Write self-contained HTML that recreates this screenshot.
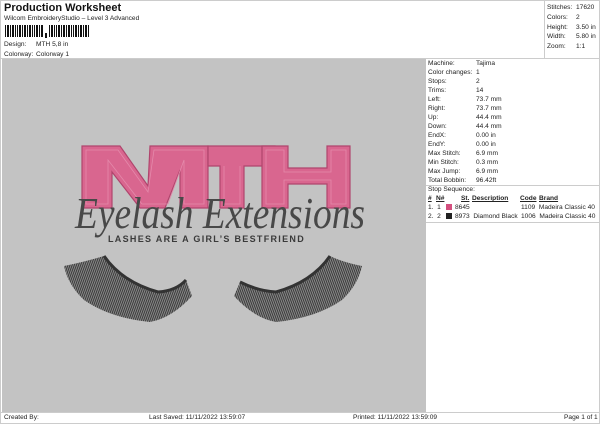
<!DOCTYPE html>
<html><head><meta charset="utf-8"><style>
*{margin:0;padding:0;box-sizing:border-box}
body{width:600px;height:424px;background:#fff;font-family:"Liberation Sans",sans-serif;color:#222;position:relative;overflow:hidden;font-size:6.6px}
.a{position:absolute;white-space:nowrap}
</style></head><body>
<div class="a" style="left:0;top:0;width:600px;height:424px;border:1px solid #ccc"></div>
<div class="a" style="left:4px;top:2px;font-size:11px;font-weight:bold;color:#111">Production Worksheet</div>
<div class="a" style="left:4px;top:15px">Wilcom EmbroideryStudio – Level 3 Advanced</div>
<svg class="a" style="left:5px;top:25px" width="85" height="13">
<g fill="#111">
<rect x="0" y="0" width="1" height="12"/><rect x="2" y="0" width="2" height="12"/><rect x="5" y="0" width="1" height="12"/><rect x="7" y="0" width="2" height="12"/><rect x="10" y="0" width="1" height="12"/><rect x="12" y="0" width="1" height="12"/><rect x="14" y="0" width="2" height="12"/><rect x="17" y="0" width="1" height="12"/><rect x="19" y="0" width="2" height="12"/><rect x="22" y="0" width="1" height="12"/><rect x="24" y="0" width="2" height="12"/><rect x="27" y="0" width="1" height="12"/><rect x="29" y="0" width="1" height="12"/><rect x="31" y="0" width="2" height="12"/><rect x="34" y="0" width="1" height="12"/><rect x="36" y="0" width="2" height="12"/><rect x="40" y="8" width="2" height="5"/><rect x="44" y="0" width="1" height="12"/><rect x="46" y="0" width="2" height="12"/><rect x="49" y="0" width="1" height="12"/><rect x="51" y="0" width="1" height="12"/><rect x="53" y="0" width="2" height="12"/><rect x="56" y="0" width="1" height="12"/><rect x="58" y="0" width="2" height="12"/><rect x="61" y="0" width="1" height="12"/><rect x="63" y="0" width="2" height="12"/><rect x="66" y="0" width="1" height="12"/><rect x="68" y="0" width="1" height="12"/><rect x="70" y="0" width="2" height="12"/><rect x="73" y="0" width="1" height="12"/><rect x="75" y="0" width="2" height="12"/><rect x="78" y="0" width="1" height="12"/><rect x="80" y="0" width="2" height="12"/><rect x="83" y="0" width="1" height="12"/>
</g></svg>
<div class="a" style="left:4px;top:41px">Design:</div><div class="a" style="left:36px;top:41px">MTH 5,8 in</div>
<div class="a" style="left:4px;top:51px">Colorway:</div><div class="a" style="left:36px;top:51px">Colorway 1</div>
<div class="a" style="left:544px;top:0;width:55px;height:58px;border-left:1px solid #ccc"></div>
<div class="a" style="left:547px;top:3px;line-height:9.8px">Stitches:<br>Colors:<br>Height:<br>Width:<br>Zoom:</div>
<div class="a" style="left:576px;top:3px;line-height:9.8px">17620<br>2<br>3.50 in<br>5.80 in<br>1:1</div>
<div class="a" style="left:0;top:58px;width:600px;border-top:1px solid #ccc"></div>
<div class="a" style="left:2px;top:59px;width:424px;height:353px;background:#c3c3c3"></div>
<div class="a" style="left:428px;top:59px;line-height:9px">Machine:<br>Color changes:<br>Stops:<br>Trims:<br>Left:<br>Right:<br>Up:<br>Down:<br>EndX:<br>EndY:<br>Max Stitch:<br>Min Stitch:<br>Max Jump:<br>Total Bobbin:</div>
<div class="a" style="left:476px;top:59px;line-height:9px">Tajima<br>1<br>2<br>14<br>73.7 mm<br>73.7 mm<br>44.4 mm<br>44.4 mm<br>0.00 in<br>0.00 in<br>6.9 mm<br>0.3 mm<br>6.9 mm<br>96.42ft</div>
<div class="a" style="left:426px;top:185px;width:174px;border-top:1px solid #ccc"></div>
<div class="a" style="left:428px;top:186px">Stop Sequence:</div>
<div class="a" style="left:428px;top:195px;font-weight:bold;text-decoration:underline">#</div>
<div class="a" style="left:436px;top:195px;font-weight:bold;text-decoration:underline">N#</div>
<div class="a" style="left:461px;top:195px;font-weight:bold;text-decoration:underline">St.</div>
<div class="a" style="left:472px;top:195px;font-weight:bold;text-decoration:underline">Description</div>
<div class="a" style="left:520px;top:195px;font-weight:bold;text-decoration:underline">Code</div>
<div class="a" style="left:539px;top:195px;font-weight:bold;text-decoration:underline">Brand</div>
<div class="a" style="left:428px;top:204px">1.&nbsp; 1</div><div class="a" style="left:446px;top:204px;width:6px;height:6px;background:#d4507f"></div><div class="a" style="left:455px;top:204px">8645</div><div class="a" style="left:521px;top:204px">1109&nbsp; Madeira Classic 40</div>
<div class="a" style="left:428px;top:213px">2.&nbsp; 2</div><div class="a" style="left:446px;top:213px;width:6px;height:6px;background:#222"></div><div class="a" style="left:455px;top:213px">8973&nbsp; Diamond Black</div><div class="a" style="left:521px;top:213px">1006&nbsp; Madeira Classic 40</div>
<div class="a" style="left:426px;top:222px;width:174px;border-top:1px solid #ccc"></div>
<svg class="a" style="left:0;top:0" width="426" height="412">
<defs>
<pattern id="h" width="2" height="4" patternUnits="userSpaceOnUse" patternTransform="rotate(20)"><rect width="2" height="4" fill="#8a8a8a"/><rect width="1" height="4" fill="#3a3a3a"/></pattern>
<pattern id="h2" width="2" height="4" patternUnits="userSpaceOnUse" patternTransform="rotate(-20)"><rect width="2" height="4" fill="#8a8a8a"/><rect width="1" height="4" fill="#3a3a3a"/></pattern>
</defs>
<g fill="#d9668f" stroke="#b0456d" stroke-width="1.2">
<path d="M82,146 H120 L148,186 L150,146 H208 V208 H180 V170 L165,208 H140 L112,172 V208 H82 Z"/>
<path d="M208,146 H275 V166 H244 V208 H220 V166 H208 Z"/>
<path d="M262,146 H288 V168 H327 V146 H350 V208 H327 V184 H288 V208 H262 Z"/>
</g>
<g fill="none" stroke="#e48aab" stroke-width="0.8">
<path d="M86,150 H118 L148,192 L154,150 H204 V204 H184 V160 L168,204 H142 L108,160 V204 H86 Z"/>
<path d="M266,150 H284 V172 H331 V150 H346 V204 H331 V180 H284 V204 H266 Z"/>
<path d="M224,166 V204 H240 V166"/>
</g>
<text x="75" y="228" font-family="Liberation Serif,serif" font-style="italic" font-size="44" fill="#484848" textLength="290" lengthAdjust="spacingAndGlyphs">Eyelash Extensions</text>
<text x="108" y="242" font-family="Liberation Sans,sans-serif" font-weight="bold" font-size="9" fill="#3a3a3a" letter-spacing="1.3">LASHES ARE A GIRL’S BESTFRIEND</text>
<path d="M104,256 Q122,282 158,292 Q176,291 186,280 L192,296 Q172,318 150,322 Q110,318 84,300 Q68,285 64,266 Q84,262 104,256 Z" fill="url(#h)"/>
<path d="M104,256 Q122,282 158,292 Q176,291 186,280" stroke="#333" stroke-width="3" fill="none"/>
<path d="M330,256 Q312,282 276,292 Q258,291 240,282 L234,296 Q254,318 276,322 Q316,318 342,300 Q358,285 362,266 Q342,262 330,256 Z" fill="url(#h2)"/>
<path d="M330,256 Q312,282 276,292 Q258,291 240,282" stroke="#333" stroke-width="3" fill="none"/>
</svg>
<div class="a" style="left:0;top:412px;width:600px;border-top:1px solid #ccc"></div>
<div class="a" style="left:4px;top:414px">Created By:</div>
<div class="a" style="left:149px;top:414px">Last Saved: 11/11/2022 13:59:07</div>
<div class="a" style="left:353px;top:414px">Printed: 11/11/2022 13:59:09</div>
<div class="a" style="left:564px;top:414px">Page 1 of 1</div>
</body></html>
